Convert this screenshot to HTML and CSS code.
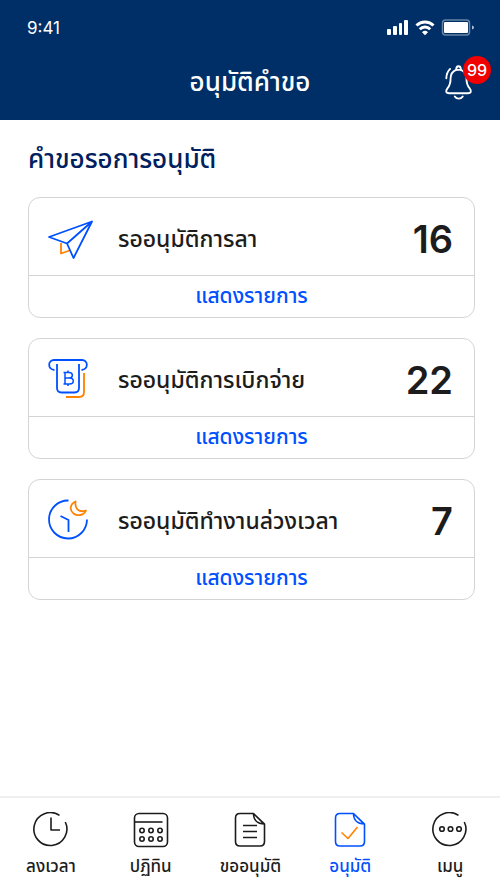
FILE: index.html
```html
<!DOCTYPE html>
<html lang="th">
<head>
<meta charset="utf-8">
<meta name="viewport" content="width=device-width, initial-scale=1">
<title>อนุมัติคำขอ</title>
<link rel="stylesheet" href="styles.css">
</head>
<body>
<div class="app">
  <header class="header">
    <div class="status">
      <span class="time">9:41</span>
      <svg class="status-icons" width="88" height="20" viewBox="0 0 88 20" aria-hidden="true">
        <g fill="#fff">
          <rect x="1" y="11" width="4" height="6" rx="1"/>
          <rect x="7" y="8" width="4" height="9" rx="1"/>
          <rect x="13" y="5" width="3" height="12" rx="1"/>
          <rect x="18" y="2" width="4" height="15" rx="1"/>
          <path d="M39 17.200l3-3a4.500 4.500 0 0 0-6 0z"/>
          <rect x="58" y="4" width="24" height="11" rx="1"/>
          <path d="M86 7.500v4q2-.5 2-2t-2-2z" opacity=".7"/>
        </g>
        <path d="M30.500 7.500a12 12 0 0 1 17 0M33.800 11.300a7.300 7.300 0 0 1 10.400 0" fill="none" stroke="#fff" stroke-width="3"/>
        <rect x="56.500" y="2" width="27" height="15" rx="3" fill="none" stroke="#6685a6" stroke-width="1.500"/>
      </svg>
    </div>
    <div class="title-row">
      <h1 class="title">อนุมัติคำขอ</h1>
      <button class="bell" type="button" aria-label="การแจ้งเตือน">
        <svg width="30" height="36" viewBox="0 0 32 38" fill="none" stroke="#fff" stroke-width="2" stroke-linecap="round" stroke-linejoin="round" aria-hidden="true">
          <path d="M13 6C9 7.500 7 11 7 15.500c0 6.500-1.500 8-3.500 10.500-2.500 3-1 5 2 5h20c3 0 4.500-2 2-5-2-2.500-3.500-4-3.500-10.500C24 11 22 7.500 18 6"/>
          <path d="M13 6c0-5 5-5 5 0zM11.500 34.500c2 3 6.500 3 8.500 0M2.500 15c0-4.500 1.500-7.500 4-10"/>
        </svg>
        <span class="badge">99</span>
      </button>
    </div>
  </header>

  <main class="content">
    <h2 class="heading">คำขอรอการอนุมัติ</h2>

    <section class="card">
      <div class="card-main">
        <svg class="card-icon" width="48" height="42" viewBox="0 0 48 42" fill="none" stroke="#0050ff" stroke-width="1.800" stroke-linejoin="round" aria-hidden="true">
          <path d="M13 26v10.500l8.500-3" stroke="#ff8200"/>
          <path d="M44 4.500L1 20l18 6.500 6.500 14.500zM44 4.500l-25 22"/>
        </svg>
        <h3 class="name">รออนุมัติการลา</h3>
        <span class="count">16</span>
      </div>
      <button class="more" type="button">แสดงรายการ</button>
    </section>

    <section class="card">
      <div class="card-main">
        <svg class="card-icon" width="48" height="42" viewBox="0 0 48 42" fill="none" stroke="#0050ff" stroke-width="1.800" aria-hidden="true">
          <path d="M6.500 12C-1 11 0 2 6 2h28c6 0 7 9-.5 10M9 6v24q0 4.500 4.500 4.500h13q4.500 0 4.500-4.500V6"/>
          <path d="M17 14.500h4c4.500 0 4.500 5.500 0 5.500h-4zm0 5.500h4.500c5 0 5 6 0 6h-4.500zM15.500 14.500h2M15.500 26h2M20 12.500v2M20 26v2" stroke-width="1.500"/>
          <path d="M36 15v19q0 5-5 5H18" stroke="#ff8200"/>
        </svg>
        <h3 class="name">รออนุมัติการเบิกจ่าย</h3>
        <span class="count">22</span>
      </div>
      <button class="more" type="button">แสดงรายการ</button>
    </section>

    <section class="card">
      <div class="card-main">
        <svg class="card-icon" width="48" height="42" viewBox="0 0 48 42" fill="none" stroke="#0050ff" stroke-width="1.800" stroke-linejoin="round" aria-hidden="true">
          <path d="M20.500 1.500A19 19 0 1 0 39 20.500M20.500 33V21L12.500 17"/>
          <path d="M27.500 2.500c-6 3-6 9-2 12s10.500 2 12.500-3c-7 2.500-11.500-2-10.500-9z" stroke="#ff8200"/>
        </svg>
        <h3 class="name">รออนุมัติทำงานล่วงเวลา</h3>
        <span class="count">7</span>
      </div>
      <button class="more" type="button">แสดงรายการ</button>
    </section>
  </main>

  <nav class="nav">
    <a class="tab" href="#time">
      <svg class="tab-icon" viewBox="0 0 36 36" aria-hidden="true"><path d="M26.500 3.300A16.500 16.500 0 1 0 32.300 10M18 5.500V18h9"/></svg>
      <span>ลงเวลา</span>
    </a>
    <a class="tab" href="#calendar">
      <svg class="tab-icon" viewBox="0 0 36 36" aria-hidden="true"><rect x="1.500" y="1.500" width="33" height="33" rx="4.500"/><path d="M2 10h27.500"/><circle cx="9" cy="18.500" r="2.200"/><circle cx="18" cy="18.500" r="2.200"/><circle cx="27" cy="18.500" r="2.200"/><circle cx="9" cy="27" r="2.200"/><circle cx="18" cy="27" r="2.200"/><circle cx="27" cy="27" r="2.200"/></svg>
      <span>ปฏิทิน</span>
    </a>
    <a class="tab" href="#request">
      <svg class="tab-icon" viewBox="0 0 36 36" aria-hidden="true"><path d="M21.500 1.500H8Q3.500 1.500 3.500 6v23.500Q3.500 34 8 34h20q4.500 0 4.500-4.500V12zM21.500 1.500c0 6 3.500 10.500 11 10.500M23.500 3.500l7.500 7.500M11 13.500h14M11 19.500h14M11 25.500h14"/></svg>
      <span>ขออนุมัติ</span>
    </a>
    <a class="tab tab-active" href="#approve" aria-current="page">
      <svg class="tab-icon" viewBox="0 0 36 36" aria-hidden="true"><path d="M21.500 1.500H8Q3.500 1.500 3.500 6v23.500Q3.500 34 8 34h20q4.500 0 4.500-4.500V12zM21.500 1.500c0 6 3.500 10.500 11 10.500M23.500 3.500l7.500 7.500"/><path class="check" d="M9.500 20.500l6.500 6 9.500-11.500"/></svg>
      <span>อนุมัติ</span>
    </a>
    <a class="tab" href="#menu">
      <svg class="tab-icon" viewBox="0 0 36 36" aria-hidden="true"><path d="M26.500 3.300A16.500 16.500 0 1 0 32.300 10"/><circle cx="10" cy="17" r="2.300"/><circle cx="18.500" cy="17" r="2.300"/><circle cx="27" cy="17" r="2.300"/></svg>
      <span>เมนู</span>
    </a>
  </nav>
</div>
</body>
</html>
```
FILE: styles.css
```css
* { box-sizing: border-box; }
body {
  margin: 0;
  background: #fff;
  color: #1c1c1c;
  font-family: Inter, "Noto Sans Thai", "Noto Sans", sans-serif;
}
h1, h2, h3 { margin: 0; font-weight: 500; }
button { font: inherit; border: 0; background: none; padding: 0; cursor: pointer; }
.app { min-height: 100vh; display: flex; flex-direction: column; }

.header { background: #002e67; color: #fff; }
.status {
  display: flex;
  align-items: center;
  justify-content: space-between;
  height: 44px;
  padding: 12px 26px 0 27px;
}
.time { font-size: 17px; line-height: 24px; }
.title-row {
  display: grid;
  grid-template-columns: 1fr auto 1fr;
  align-items: center;
  height: 76px;
}
.title { grid-column: 2; font-size: 26px; line-height: 36px; }
.bell {
  position: relative;
  justify-self: end;
  margin-right: 26px;
  width: 30px;
  height: 36px;
}
.bell svg { display: block; }
.badge {
  position: absolute;
  top: -8px;
  right: -17px;
  width: 28px;
  height: 28px;
  border-radius: 50%;
  background: #f00000;
  color: #fff;
  font-size: 16px;
  font-weight: 500;
  line-height: 28px;
  text-align: center;
}

.content {
  flex: 1;
  display: flex;
  flex-direction: column;
  gap: 20px;
  padding: 21px 25px 24px 28px;
}
.heading { color: #002060; font-size: 26px; line-height: 36px; }
.card { border: 1px solid #d4d4d4; border-radius: 12px; }
.card-main {
  display: flex;
  align-items: center;
  height: 77px;
  padding: 2px 21px 0 19px;
}
.card-icon { flex: none; margin-right: 22px; }
.name { flex: 1; padding-top: 2px; font-size: 23px; line-height: 32px; }
.count { padding-top: 2px; font-size: 38px; font-weight: 600; line-height: 48px; }
.more {
  display: block;
  width: 100%;
  height: 42px;
  border-top: 1px solid #d4d4d4;
  color: #0050ff;
  font-size: 21px;
  font-weight: 500;
}

.nav {
  display: grid;
  grid-template-columns: repeat(5, 1fr);
  height: 94px;
  padding: 14px 0 0 1px;
  border-top: 2px solid #efefef;
}
.tab {
  display: flex;
  flex-direction: column;
  align-items: center;
  gap: 5px;
  color: #1c1c1c;
  font-size: 17px;
  font-weight: 500;
  line-height: 26px;
  text-decoration: none;
}
.tab-icon {
  width: 36px;
  height: 36px;
  fill: none;
  stroke: currentColor;
  stroke-width: 1.6;
  stroke-linejoin: round;
}
.tab-active { color: #0050ff; }
.check { stroke: #ff8200; }
```
